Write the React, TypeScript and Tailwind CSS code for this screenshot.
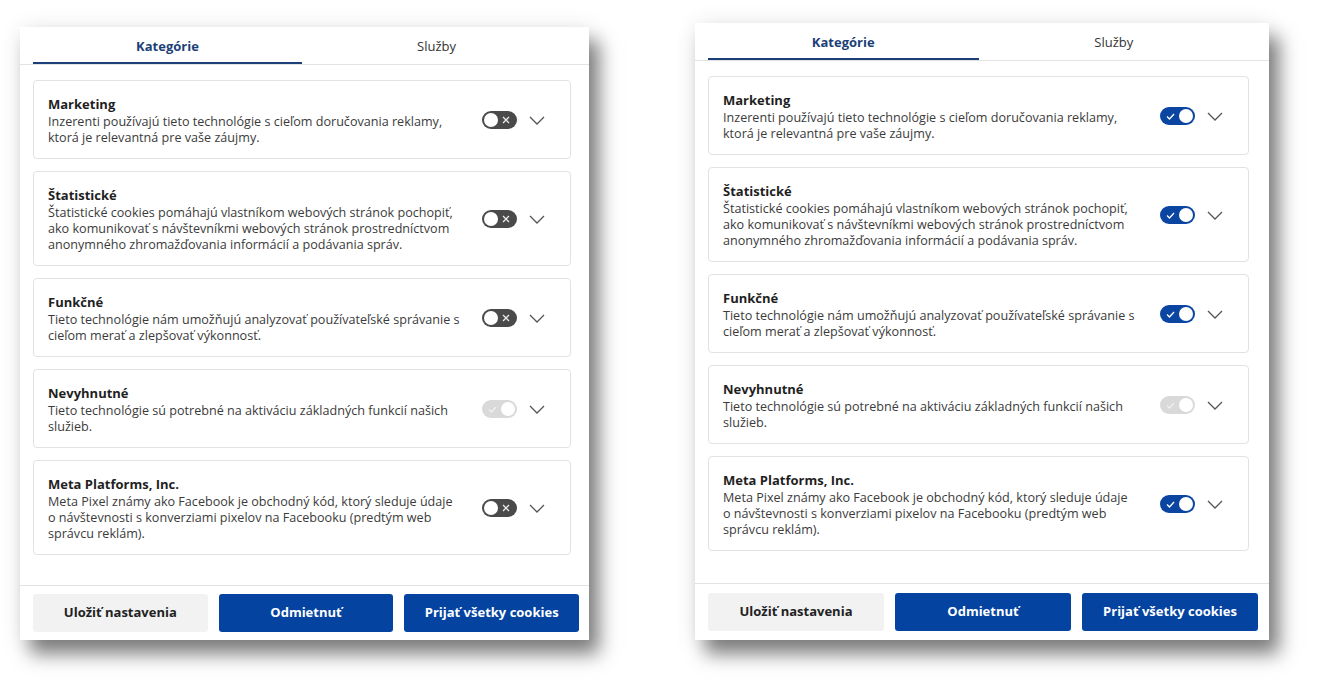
import React from "react";

type Category = {
  title: string;
  text: string;
  locked?: boolean;
};

const categories: Category[] = [
  {
    title: "Marketing",
    text: "Inzerenti používajú tieto technológie s cieľom doručovania reklamy, ktorá je relevantná pre vaše záujmy.",
  },
  {
    title: "Štatistické",
    text: "Štatistické cookies pomáhajú vlastníkom webových stránok pochopiť, ako komunikovať s návštevníkmi webových stránok prostredníctvom anonymného zhromažďovania informácií a podávania správ.",
  },
  {
    title: "Funkčné",
    text: "Tieto technológie nám umožňujú analyzovať používateľské správanie s cieľom merať a zlepšovať výkonnosť.",
  },
  {
    title: "Nevyhnutné",
    text: "Tieto technológie sú potrebné na aktiváciu základných funkcií našich služieb.",
    locked: true,
  },
  {
    title: "Meta Platforms, Inc.",
    text: "Meta Pixel známy ako Facebook je obchodný kód, ktorý sleduje údaje o návštevnosti s konverziami pixelov na Facebooku (predtým web správcu reklám).",
  },
];

function Toggle({ on, locked }: { on: boolean; locked?: boolean }) {
  if (locked) {
    return (
      <div className="flex h-[18px] w-[35px] items-center justify-between rounded-full bg-[#d9d9d9] pl-[6px] pr-[2px]">
        <svg width="9" height="7" viewBox="0 0 9 7">
          <polyline points="1,3.5 3.5,6 8,1" fill="none" stroke="#f0f0f0" strokeWidth="1.3" />
        </svg>
        <div className="size-[14px] rounded-full bg-white" />
      </div>
    );
  }
  if (on) {
    return (
      <div className="flex h-[18px] w-[35px] items-center justify-between rounded-full bg-[#0b45a2] pl-[6px] pr-[2px]">
        <svg width="9" height="7" viewBox="0 0 9 7">
          <polyline points="1,3.5 3.5,6 8,1" fill="none" stroke="#ffffff" strokeWidth="1.3" />
        </svg>
        <div className="size-[14px] rounded-full bg-white" />
      </div>
    );
  }
  return (
    <div className="flex h-[18px] w-[35px] items-center justify-between rounded-full bg-[#4a4a4a] pl-[2px] pr-[7px]">
      <div className="size-[14px] rounded-full bg-white" />
      <svg width="8" height="8" viewBox="0 0 8 8">
        <path d="M1 1 7 7M7 1 1 7" fill="none" stroke="#ececec" strokeWidth="1.3" />
      </svg>
    </div>
  );
}

function Chevron() {
  return (
    <svg width="16" height="9" viewBox="0 0 16 9">
      <polyline points="1,1 8,8 15,1" fill="none" stroke="#555555" strokeWidth="1.3" />
    </svg>
  );
}

function CategoryCard({ cat, on }: { cat: Category; on: boolean }) {
  return (
    <div className="flex items-center rounded-[4px] border border-[#e2e2e2] pt-[13px] pb-[12px] pl-[14px] pr-[25px]">
      <div className="w-[412px]">
        <div className="text-[13px] leading-[20px] font-bold text-[#1f1f1f]">{cat.title}</div>
        <div className="text-[12.6px] leading-[16px] text-[#3b3b3b]">{cat.text}</div>
      </div>
      <div className="ml-auto flex items-center gap-[12px]">
        <Toggle on={on} locked={cat.locked} />
        <Chevron />
      </div>
    </div>
  );
}

function Panel({ on, wide }: { on: boolean; wide?: boolean }) {
  return (
    <div
      className={
        wide
          ? "mt-[23px] ml-[106px] flex h-[617px] w-[574px] flex-col bg-white shadow-[10px_14px_18px_rgba(0,0,0,0.5),0_0_22px_rgba(0,0,0,0.07)]"
          : "mt-[27px] ml-[20px] flex h-[613px] w-[569px] flex-col bg-white shadow-[10px_14px_18px_rgba(0,0,0,0.5),0_0_22px_rgba(0,0,0,0.07)]"
      }
    >
      <div className={wide ? "border-b border-[#e2e2e2] pr-[20px] pl-[13px]" : "border-b border-[#e2e2e2] pr-[18px] pl-[13px]"}>
        <div className="flex h-[37px]">
          <div className="flex flex-1 items-center justify-center border-b-2 border-[#1c3f78] pt-[4px] text-[13px] font-bold text-[#1c3f78]">
            Kategórie
          </div>
          <div className="flex flex-1 items-center justify-center pt-[2px] text-[13px] text-[#333333]">Služby</div>
        </div>
      </div>
      <div className={wide ? "flex flex-1 flex-col gap-[12px] pt-[15px] pr-[20px] pl-[13px]" : "flex flex-1 flex-col gap-[12px] pt-[15px] pr-[18px] pl-[13px]"}>
        {categories.map((cat) => (
          <CategoryCard key={cat.title} cat={cat} on={on} />
        ))}
      </div>
      <div className={wide ? "flex gap-[11px] border-t border-[#e2e2e2] pt-[9px] pr-[11px] pb-[9px] pl-[13px]" : "flex gap-[11px] border-t border-[#e2e2e2] pt-[8px] pr-[10px] pb-[8px] pl-[13px]"}>
        <button type="button" className="h-[38px] flex-1 rounded-[3px] bg-[#f2f2f2] text-[13px] font-bold text-[#222222]">
          Uložiť nastavenia
        </button>
        <button type="button" className="h-[38px] flex-1 rounded-[3px] bg-[#0443a0] text-[13px] font-bold text-white">
          Odmietnuť
        </button>
        <button type="button" className="h-[38px] flex-1 rounded-[3px] bg-[#0443a0] text-[13px] font-bold text-white">
          Prijať všetky cookies
        </button>
      </div>
    </div>
  );
}

export default function App() {
  return (
    <div className="flex h-[681px] w-[1320px] items-start overflow-hidden bg-white font-['Open_Sans',sans-serif]">
      <Panel on={false} />
      <Panel on wide />
    </div>
  );
}
